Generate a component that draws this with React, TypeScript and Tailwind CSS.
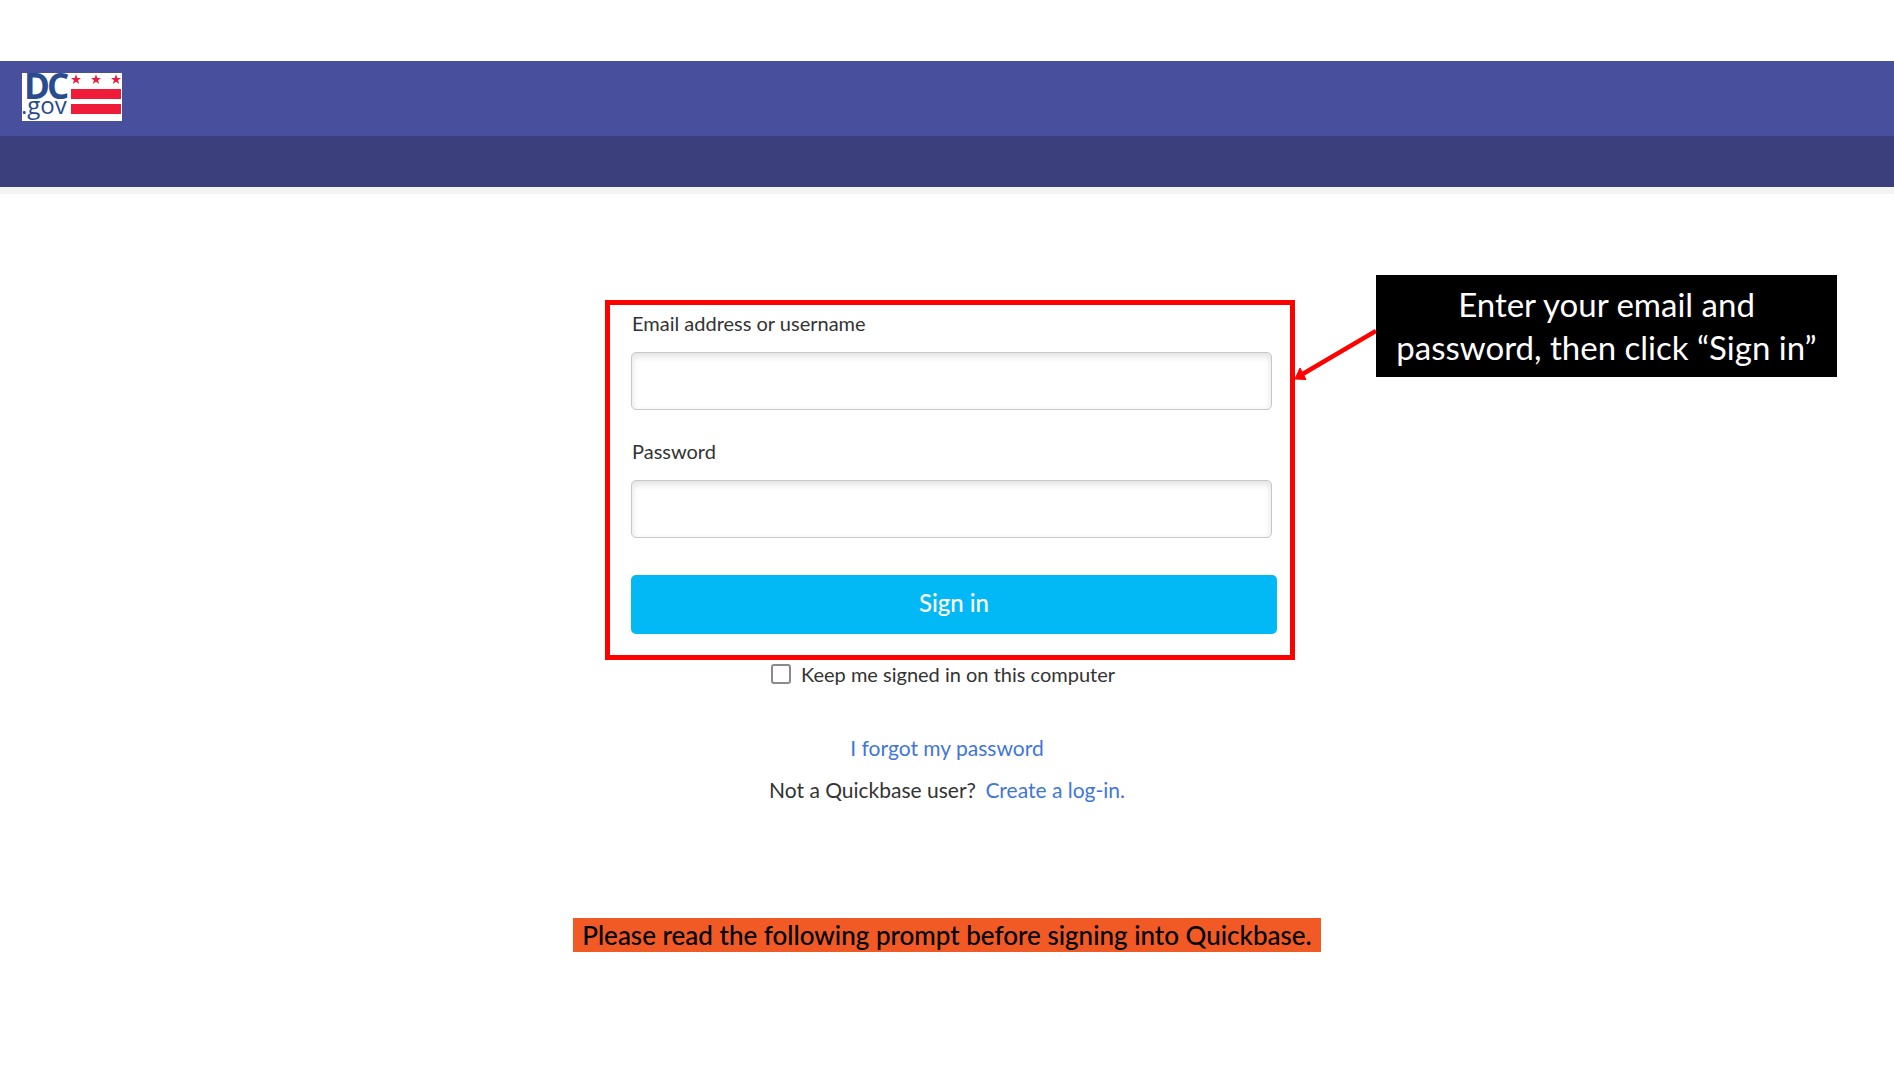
import { useId } from "react";

function Star({ x }: { x: number }) {
  return (
    <path
      transform={`translate(${x} 6.6)`}
      fill="#ee1c39"
      d="M0-5.400 1.300-1.700 5-1.700 2 .6 3.200 4.500 0 2.200-3.200 4.500-2 .6-5-1.700-1.300-1.700Z"
    />
  );
}

function Logo() {
  return (
    <svg
      viewBox="0 0 100 48"
      className="block h-12 w-[100px] overflow-visible bg-white font-['Open_Sans',sans-serif]"
      role="img"
      aria-label="DC.gov"
    >
      <text x="2" y="26" fontSize="35" fontWeight="700" fill="#2a4b8d">
        D
      </text>
      <text x="25" y="26" fontSize="35" fontWeight="700" fill="#2a4b8d">
        C
      </text>
      <text x="-1" y="41" fontSize="24" fill="#2a4b8d">
        .gov
      </text>
      <Star x={54} />
      <Star x={74} />
      <Star x={94} />
      <rect x="49" y="16" width="50" height="10" fill="#ee1c39" />
      <rect x="49" y="31" width="50" height="10" fill="#ee1c39" />
    </svg>
  );
}

function Field({ label, type }: { label: string; type: string }) {
  const id = useId();
  return (
    <div className="mb-[26px] flex flex-col gap-[14px]">
      <label htmlFor={id} className="pl-px leading-[30px]">
        {label}
      </label>
      <input
        id={id}
        type={type}
        className="mr-[5px] h-[58px] rounded-[5px] border border-[#c8c8c8] bg-white px-4 shadow-[inset_0_3px_7px_rgba(0,0,0,0.13)] outline-none"
      />
    </div>
  );
}

export default function App() {
  return (
    <div className="bg-white pt-[61px] font-[Lato,sans-serif] text-xl text-[#333333]">
      <header>
        <div className="flex h-[75px] items-start bg-[#484f9d] px-[22px] pt-3">
          <Logo />
        </div>
        <div className="h-[51px] bg-[#3b407c]" />
        <div className="h-[7px] bg-[#f4f4f4]" />
      </header>

      <main className="pt-[81px]">
        <div className="grid grid-cols-[1fr_690px_1fr] items-start pl-[6px]">
          <form
            className="col-start-2 mt-[25px] flex flex-col border-[5px] border-[#ff0000] pt-[3px] pr-[13px] pb-[21px] pl-[21px]"
            onSubmit={(e) => e.preventDefault()}
          >
            <Field label="Email address or username" type="text" />
            <Field label="Password" type="password" />
            <button
              type="submit"
              className="mt-[11px] h-[59px] rounded-[5px] bg-[#03b9f5] pb-1 text-2xl font-medium text-white"
            >
              Sign in
            </button>
          </form>
          <div className="flex items-start">
            <svg viewBox="0 0 81 110" className="h-[110px] w-[81px] shrink-0" aria-hidden="true">
              <path d="M81 56 6 100" stroke="#ff0000" strokeWidth="4.5" fill="none" />
              <path d="M0 104 5 93 11 104.500Z" fill="#ff0000" stroke="#ff0000" strokeWidth="1" />
            </svg>
            <p className="w-[461px] bg-black py-2 text-center text-[33px] leading-[43px] text-white">
              Enter your email and
              <br />
              password, then click “Sign in”
            </p>
          </div>
        </div>

        <div className="flex flex-col items-center leading-7">
          <label className="flex items-center gap-[10px] pr-2">
            <input
              type="checkbox"
              className="size-5 appearance-none rounded-[3px] border-2 border-[#8a8a8a] bg-white"
            />
            Keep me signed in on this computer
          </label>
          <a href="#forgot" className="mt-[46px] text-[21px] leading-7 text-[#3f76d8]">
            I forgot my password
          </a>
          <p className="mt-[14px] text-[21px] leading-7">
            Not a Quickbase user?{" "}
            <a href="#create" className="ml-1 text-[#3f76d8]">
              Create a log-in.
            </a>
          </p>
          <p className="mt-[114px] bg-[#f15a24] px-[9px] text-[26px] leading-[34px] font-medium text-black">
            Please read the following prompt before signing into Quickbase.
          </p>
        </div>
      </main>
    </div>
  );
}
